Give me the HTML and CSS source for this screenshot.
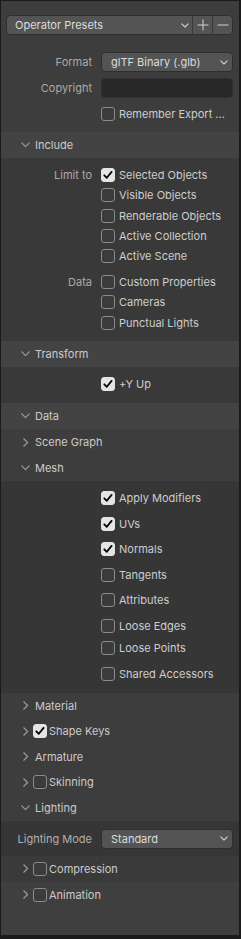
FILE: index.html
```html
<!DOCTYPE html>
<html lang="en">

<head>
    <meta charset="UTF-8">
    <meta name="viewport" content="width=device-width, initial-scale=1.0">
    <title>glTF Export</title>
    <link rel="stylesheet" href="styles.css">
</head>

<body>
<div class="panel">
    <div class="top">
        <div class="presets">
            <div class="pre_menu">
                <span>Operator Presets</span>
                <svg class="drop" width="8" height="5" viewBox="0 0 8 5"><path d="M0.8 0.8 L4 4 L7.2 0.8"/></svg>
            </div>
            <div class="pre_btn">
                <svg width="12" height="12" viewBox="0 0 12 12"><path d="M6 0.5 V11.5 M0.5 6 H11.5"/></svg>
            </div>
            <div class="pre_btn">
                <svg width="12" height="12" viewBox="0 0 12 12"><path d="M0.5 6 H11.5"/></svg>
            </div>
        </div>
        <div class="prop">
            <span class="lbl">Format</span>
            <div class="menu">
                <span>glTF Binary (.glb)</span>
                <svg class="drop" width="8" height="5" viewBox="0 0 8 5"><path d="M0.8 0.8 L4 4 L7.2 0.8"/></svg>
            </div>
        </div>
        <div class="prop">
            <span class="lbl">Copyright</span>
            <div class="field"></div>
        </div>
        <div class="prop">
            <span class="lbl"></span>
            <div class="check"><span class="box"></span>Remember Export ...</div>
        </div>
    </div>

    <!-- Include -->
    <div class="head main_head">
        <svg class="open" width="9" height="6" viewBox="0 0 9 6"><path d="M0.8 0.8 L4.5 4.6 L8.2 0.8"/></svg>
        <span>Include</span>
    </div>
    <div class="body inc_body">
        <div class="crow"><span class="lbl">Limit to</span><div class="check"><span class="box on"></span>Selected Objects</div></div>
        <div class="crow"><span class="lbl"></span><div class="check"><span class="box"></span>Visible Objects</div></div>
        <div class="crow"><span class="lbl"></span><div class="check"><span class="box"></span>Renderable Objects</div></div>
        <div class="crow"><span class="lbl"></span><div class="check"><span class="box"></span>Active Collection</div></div>
        <div class="crow"><span class="lbl"></span><div class="check"><span class="box"></span>Active Scene</div></div>
        <div class="crow gap"><span class="lbl">Data</span><div class="check"><span class="box"></span>Custom Properties</div></div>
        <div class="crow"><span class="lbl"></span><div class="check"><span class="box"></span>Cameras</div></div>
        <div class="crow"><span class="lbl"></span><div class="check"><span class="box"></span>Punctual Lights</div></div>
    </div>

    <!-- Transform -->
    <div class="head main_head">
        <svg class="open" width="9" height="6" viewBox="0 0 9 6"><path d="M0.8 0.8 L4.5 4.6 L8.2 0.8"/></svg>
        <span>Transform</span>
    </div>
    <div class="body tr_body">
        <div class="crow"><span class="lbl"></span><div class="check"><span class="box on"></span>+Y Up</div></div>
    </div>

    <!-- Data -->
    <div class="head main_head">
        <svg class="open" width="9" height="6" viewBox="0 0 9 6"><path d="M0.8 0.8 L4.5 4.6 L8.2 0.8"/></svg>
        <span>Data</span>
    </div>
    <div class="head sub_head">
        <svg class="closed" width="6" height="9" viewBox="0 0 6 9"><path d="M0.8 0.8 L4.6 4.5 L0.8 8.2"/></svg>
        <span>Scene Graph</span>
    </div>
    <div class="head sub_head mesh_head">
        <svg class="open" width="9" height="6" viewBox="0 0 9 6"><path d="M0.8 0.8 L4.5 4.6 L8.2 0.8"/></svg>
        <span>Mesh</span>
    </div>
    <div class="body mesh_body">
        <div class="mrow"><span class="lbl"></span><div class="check"><span class="box on"></span>Apply Modifiers</div></div>
        <div class="mrow"><span class="lbl"></span><div class="check"><span class="box on"></span>UVs</div></div>
        <div class="mrow"><span class="lbl"></span><div class="check"><span class="box on"></span>Normals</div></div>
        <div class="mrow"><span class="lbl"></span><div class="check"><span class="box"></span>Tangents</div></div>
        <div class="mrow"><span class="lbl"></span><div class="check"><span class="box"></span>Attributes</div></div>
        <div class="mrow"><span class="lbl"></span><div class="check"><span class="box"></span>Loose Edges</div></div>
        <div class="mrow tight"><span class="lbl"></span><div class="check"><span class="box"></span>Loose Points</div></div>
        <div class="mrow"><span class="lbl"></span><div class="check"><span class="box"></span>Shared Accessors</div></div>
    </div>
    <div class="head sub_head">
        <svg class="closed" width="6" height="9" viewBox="0 0 6 9"><path d="M0.8 0.8 L4.6 4.5 L0.8 8.2"/></svg>
        <span>Material</span>
    </div>
    <div class="head sub_head">
        <svg class="closed" width="6" height="9" viewBox="0 0 6 9"><path d="M0.8 0.8 L4.6 4.5 L0.8 8.2"/></svg>
        <span class="box on"></span>
        <span>Shape Keys</span>
    </div>
    <div class="head sub_head">
        <svg class="closed" width="6" height="9" viewBox="0 0 6 9"><path d="M0.8 0.8 L4.6 4.5 L0.8 8.2"/></svg>
        <span>Armature</span>
    </div>
    <div class="head sub_head">
        <svg class="closed" width="6" height="9" viewBox="0 0 6 9"><path d="M0.8 0.8 L4.6 4.5 L0.8 8.2"/></svg>
        <span class="box"></span>
        <span>Skinning</span>
    </div>
    <div class="head sub_head">
        <svg class="open" width="9" height="6" viewBox="0 0 9 6"><path d="M0.8 0.8 L4.5 4.6 L8.2 0.8"/></svg>
        <span>Lighting</span>
    </div>
    <div class="body light_body">
        <div class="prop">
            <span class="lbl">Lighting Mode</span>
            <div class="menu">
                <span>Standard</span>
                <svg class="drop" width="8" height="5" viewBox="0 0 8 5"><path d="M0.8 0.8 L4 4 L7.2 0.8"/></svg>
            </div>
        </div>
    </div>
    <div class="head sub_head comp_head">
        <svg class="closed" width="6" height="9" viewBox="0 0 6 9"><path d="M0.8 0.8 L4.6 4.5 L0.8 8.2"/></svg>
        <span class="box"></span>
        <span>Compression</span>
    </div>

    <!-- Animation -->
    <div class="head anim_head">
        <svg class="closed" width="6" height="9" viewBox="0 0 6 9"><path d="M0.8 0.8 L4.6 4.5 L0.8 8.2"/></svg>
        <span class="box"></span>
        <span>Animation</span>
    </div>
</div>
</body>

</html>
```

FILE: styles.css
```css
* {
    margin: 0;
    padding: 0;
    box-sizing: border-box;
}

body {
    background: #1b1b1b;
    font-family: Inter, "DejaVu Sans", sans-serif;
    font-size: 11px;
    color: #cfcfcf;
}

.panel {
    width: 238px;
    height: 934px;
    margin: 1px 2px 4px 1px;
    background: #3f3f3f;
}

svg path {
    fill: none;
    stroke: #9a9a9a;
    stroke-width: 1.2;
    stroke-linecap: round;
    stroke-linejoin: round;
}

/* top area */
.top {
    padding: 14px 0 5px 0;
    background: #3d3d3d;
}

.presets {
    display: flex;
    height: 20px;
    margin: 0 6px 14px 5px;
    border-radius: 4px;
    background: #545454;
    border: 1px solid #2f2f2f;
    overflow: hidden;
}

.pre_menu {
    flex: 1;
    display: flex;
    align-items: center;
    justify-content: space-between;
    padding: 0 3px 0 8px;
    color: #dcdcdc;
}

.pre_btn {
    width: 20px;
    display: flex;
    align-items: center;
    justify-content: center;
    border-left: 1px solid #383838;
}

.pre_btn svg path {
    stroke: #d0d0d0;
    stroke-width: 1;
    stroke-linecap: butt;
}

.drop path {
    stroke: #cfcfcf;
    stroke-width: 1.1;
}

.prop {
    display: flex;
    align-items: center;
    height: 26px;
}

.lbl {
    width: 100px;
    flex: none;
    text-align: right;
    padding-right: 9px;
    color: #a9a9a9;
}

.menu {
    flex: 1;
    height: 20px;
    margin-right: 6px;
    display: flex;
    align-items: center;
    justify-content: space-between;
    padding: 0 4px 0 9px;
    border-radius: 4px;
    background: #545454;
    border: 1px solid #2f2f2f;
    color: #dcdcdc;
}

.field {
    flex: 1;
    height: 20px;
    margin-right: 6px;
    border-radius: 4px;
    background: #282828;
    border: 1px solid #303030;
}

.check {
    display: flex;
    align-items: center;
    gap: 4px;
    color: #cdcdcd;
}

.box {
    width: 14px;
    height: 14px;
    flex: none;
    border-radius: 3px;
    border: 1px solid #8b8b8b;
    background: #3b3b3b;
}

.box.on {
    background: #e4e4e4;
    border-color: #e4e4e4;
    background-image: url("data:image/svg+xml;utf8,<svg xmlns='http://www.w3.org/2000/svg' width='14' height='14' viewBox='0 0 14 14'><path d='M3.3 7.3 L5.8 9.8 L10.6 3.9' fill='none' stroke='black' stroke-width='1.8' stroke-linecap='round' stroke-linejoin='round'/></svg>");
    background-position: -1px -1px;
}

/* panel headers */
.head {
    display: flex;
    align-items: center;
    height: 26px;
    color: #cbcbcb;
}

.head .open {
    margin-left: 20px;
    margin-right: 5px;
}

.head .closed {
    margin-left: 22px;
    margin-right: 6px;
}

.head .box {
    margin: 0 2px 0 -2px;
}

.main_head {
    background: #434343;
}

.sub_head {
    background: #3d3d3d;
}

.mesh_head {
    height: 25px;
}

.body {
    background: #393939;
}

.inc_body {
    padding: 7px 0 8.25px 0;
}

.crow {
    display: flex;
    align-items: center;
    height: 20.25px;
}

.crow.gap {
    margin-top: 5.75px;
}

.tr_body {
    padding: 7px 0 9px 0;
    height: 36px;
}

.mesh_body {
    padding: 5px 0 6px 0;
    background: #363636;
}

.mrow {
    display: flex;
    align-items: center;
    height: 25.5px;
}

.mrow.tight {
    margin-top: -3px;
}

.sub_head + .sub_head {
    height: 25.5px;
}

.mesh_body + .sub_head {
    height: 26px;
}

.light_body {
    height: 35px;
    padding-top: 5px;
    background: #363636;
}

.light_body .lbl {
    color: #b0b0b0;
}

.comp_head {
    height: 26px;
    background: #3a3a3a;
}

.anim_head {
    background: #3f3f3f;
}
```
